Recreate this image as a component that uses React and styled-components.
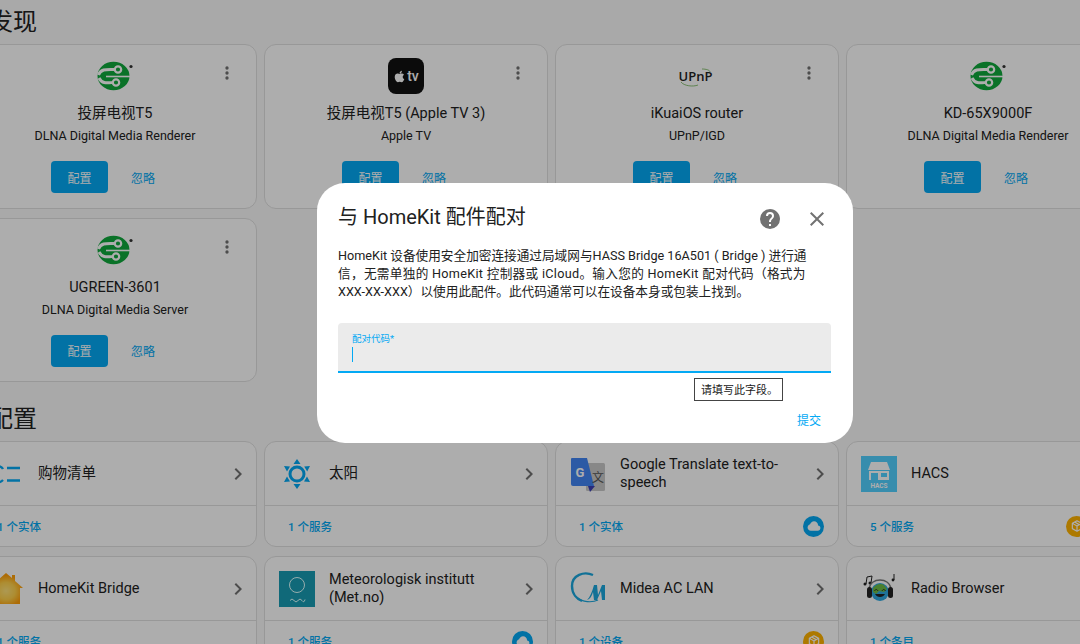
import React from 'react'
import styled, { createGlobalStyle } from 'styled-components'
import { FaApple } from 'react-icons/fa'

const GlobalStyle = createGlobalStyle`
  html, body {
    margin: 0;
    height: 100%;
    overflow: hidden;
    background: #fafafa;
  }
  body {
    font-family: Roboto, "Noto Sans CJK SC", sans-serif;
    color: #212121;
  }
`

const Page = styled.div`
  width: 1157px;
  height: 644px;
  margin-left: -27px;
  padding-top: 6px;
  box-sizing: border-box;
`

const SectionTitle = styled.h2`
  margin: ${(p) => (p.$second ? '21px' : '0')} 0 6px 16px;
  font-size: 24px;
  line-height: 32px;
  font-weight: 400;
`

const Grid = styled.div`
  display: grid;
  grid-template-columns: repeat(4, 284px);
  grid-auto-rows: ${(p) => p.$rowHeight}px;
  column-gap: 7px;
  row-gap: 9px;
`

const Card = styled.div`
  position: relative;
  box-sizing: border-box;
  border: 1px solid #e0e0e0;
  border-radius: 12px;
  background: #fff;
  display: flex;
  flex-direction: column;
`

const DiscoverCard = styled(Card)`
  align-items: center;
  padding-top: 13px;
`

const LogoBox = styled.div`
  width: 36px;
  height: 36px;
  display: flex;
  align-items: center;
  justify-content: center;
  flex: none;
`

const DeviceName = styled.div`
  margin-top: 10px;
  font-size: 14.5px;
  line-height: 20px;
`

const DeviceKind = styled.div`
  margin-top: 4px;
  font-size: 12.5px;
  line-height: 16px;
`

const Actions = styled.div`
  margin-top: 17px;
  display: flex;
  align-items: center;
`

const PrimaryButton = styled.div`
  width: 57px;
  height: 32px;
  border-radius: 4px;
  background: #03a9f4;
  color: #fff;
  font-size: 12px;
  display: flex;
  align-items: center;
  justify-content: center;
`

const GhostButton = styled.div`
  padding: 0 24px 0 23px;
  font-size: 12px;
  color: #03a9f4;
`

const MenuButton = styled.div`
  position: absolute;
  top: 18px;
  right: 19px;
  width: 20px;
  height: 20px;
  color: #727272;
`

const IntegrationTop = styled.div`
  height: 63px;
  flex: none;
  display: flex;
  align-items: center;
  padding: 0 6px 0 14px;
  border-bottom: 1px solid #e0e0e0;
`

const IntegrationName = styled.div`
  flex: 1;
  margin-left: 14px;
  font-size: 14.5px;
  line-height: 18px;
`

const Chevron = styled.div`
  width: 24px;
  height: 24px;
  color: #727272;
  flex: none;
`

const IntegrationFooter = styled.div`
  flex: 1;
  display: flex;
  align-items: center;
  justify-content: space-between;
  padding: 0 14px 0 23px;
  font-size: 11.5px;
  font-weight: 500;
  color: #03a9f4;
`

const Badges = styled.div`
  display: flex;
  gap: 7px;
`

const Badge = styled.div`
  width: 21px;
  height: 21px;
  border-radius: 50%;
  background: ${(p) => p.$color};
  color: #fff;
  display: flex;
  align-items: center;
  justify-content: center;
`

const Scrim = styled.div`
  position: fixed;
  inset: 0;
  background: rgba(0, 0, 0, 0.32);
  display: flex;
  align-items: center;
  justify-content: center;
  padding: 0 0 18px 90px;
`

const Dialog = styled.div`
  width: 536px;
  height: 260px;
  box-sizing: border-box;
  padding: 22px 0 0 21px;
  border-radius: 28px;
  background: #fff;
`

const DialogHeader = styled.div`
  display: flex;
  justify-content: space-between;
  padding-right: 24px;
`

const DialogTitle = styled.div`
  font-size: 20px;
  line-height: 24px;
`

const HeaderIcons = styled.div`
  margin-top: 2px;
  display: flex;
  gap: 23px;
  color: #727272;
`

const Description = styled.div`
  margin-top: 16px;
  font-size: 12.65px;
  line-height: 18px;
  white-space: nowrap;
`

const DescriptionLine = styled.div`
  letter-spacing: ${(p) => p.$spacing || 0}px;
`

const FieldWrap = styled.div`
  position: relative;
  width: 493px;
  margin-top: 22px;
`

const Field = styled.div`
  height: 50px;
  box-sizing: border-box;
  padding: 10px 14px 0;
  background: #ebebeb;
  border-radius: 4px 4px 0 0;
  border-bottom: 2px solid #03a9f4;
`

const FieldLabel = styled.div`
  font-size: 9.5px;
  line-height: 12px;
  color: #03a9f4;
`

const Caret = styled.div`
  width: 1px;
  height: 15px;
  margin-top: 2px;
  background: #03a9f4;
`

const ValidationTip = styled.div`
  position: absolute;
  top: 55px;
  left: 356px;
  width: 89px;
  height: 23px;
  box-sizing: border-box;
  border: 1px solid #444;
  background: #fff;
  font-size: 11px;
  line-height: 23px;
  padding-left: 6px;
  white-space: nowrap;
`

const DialogFooter = styled.div`
  margin-top: 40px;
  padding-right: 32px;
  text-align: right;
  font-size: 12px;
  line-height: 16px;
  color: #03a9f4;
`

const Mdi = ({ d, size = 24 }) => (
  <svg width={size} height={size} viewBox="0 0 24 24" fill="currentColor">
    <path d={d} />
  </svg>
)

const paths = {
  dots: 'M12,16A2,2 0 0,1 14,18A2,2 0 0,1 12,20A2,2 0 0,1 10,18A2,2 0 0,1 12,16M12,10A2,2 0 0,1 14,12A2,2 0 0,1 12,14A2,2 0 0,1 10,12A2,2 0 0,1 12,10M12,4A2,2 0 0,1 14,6A2,2 0 0,1 12,8A2,2 0 0,1 10,6A2,2 0 0,1 12,4Z',
  chevron: 'M8.59,16.58L13.17,12L8.59,7.41L10,6L16,12L10,18L8.59,16.58Z',
  help: 'M15.07,11.25L14.17,12.17C13.45,12.89 13,13.5 13,15H11V14.5C11,13.39 11.45,12.39 12.17,11.67L13.41,10.41C13.78,10.05 14,9.55 14,9C14,7.89 13.1,7 12,7A2,2 0 0,0 10,9H8A4,4 0 0,1 12,5A4,4 0 0,1 16,9C16,9.88 15.64,10.67 15.07,11.25M13,19H11V17H13M12,2A10,10 0 0,0 2,12A10,10 0 0,0 12,22A10,10 0 0,0 22,12C22,6.47 17.5,2 12,2Z',
  close: 'M19,6.41L17.59,5L12,10.59L6.41,5L5,6.41L10.59,12L5,17.59L6.41,19L12,13.41L17.59,19L19,17.59L13.41,12L19,6.41Z',
  cloud: 'M6.5,20Q4.22,20 2.61,18.43 1,16.85 1,14.58 1,12.63 2.17,11.1 3.35,9.57 5.25,9.15 5.88,6.85 7.75,5.43 9.63,4 12,4 14.93,4 16.96,6.04 19,8.07 19,11 20.73,11.2 21.86,12.5 23,13.78 23,15.5 23,17.38 21.69,18.69 20.38,20 18.5,20Z',
  box: 'M21,16.5C21,16.88 20.79,17.21 20.47,17.38L12.57,21.82C12.41,21.94 12.21,22 12,22C11.79,22 11.59,21.94 11.43,21.82L3.53,17.38C3.21,17.21 3,16.88 3,16.5V7.5C3,7.12 3.21,6.79 3.53,6.62L11.43,2.18C11.59,2.06 11.79,2 12,2C12.21,2 12.41,2.06 12.57,2.18L20.47,6.62C20.79,6.79 21,7.12 21,7.5V16.5M12,4.15L10.11,5.22L16,8.61L17.96,7.5L12,4.15M6.04,7.5L12,10.85L13.96,9.75L8.08,6.35L6.04,7.5M5,15.91L11,19.29V12.58L5,9.21V15.91M19,15.91V9.21L13,12.58V19.29L19,15.91Z',
}

const DlnaLogo = () => (
  <svg width="36" height="36" viewBox="0 0 36 36">
    <ellipse cx="16.5" cy="18" rx="16" ry="14.3" fill="#0fa83c" />
    <g fill="none" stroke="#fff">
      <path d="M1.500 17C4 10.500 10 11.500 18 11.500" strokeWidth="3" />
      <path d="M2 20C5 26 10 25 16 24.500" strokeWidth="3" />
      <path d="M9 18.500H33" strokeWidth="1.600" />
      <circle cx="21" cy="11.500" r="3.200" fill="#0fa83c" strokeWidth="2.200" />
      <circle cx="19" cy="24.500" r="3.200" fill="#0fa83c" strokeWidth="2.200" />
    </g>
    <circle cx="34" cy="8.500" r="1.600" fill="#333" />
  </svg>
)

const TvLogoBox = styled.div`
  width: 36px;
  height: 36px;
  border-radius: 8px;
  background: #111;
  color: #fff;
  display: flex;
  align-items: center;
  justify-content: center;
  gap: 1px;
  font-size: 14px;
  font-weight: 500;
`

const AppleTvLogo = () => (
  <TvLogoBox>
    <FaApple size={13} />
    tv
  </TvLogoBox>
)

const UpnpLogo = () => (
  <svg width="36" height="36" viewBox="0 0 36 36">
    <text x="16.500" y="23" textAnchor="middle" fontFamily="'Open Sans', sans-serif" fontSize="13" fontWeight="600" fill="#222">UPnP</text>
    <path d="M23 11c4 0 8 1 8 3M2 24c3 4 12 5 17 3" fill="none" stroke="#5aa83c" strokeWidth="0.7" />
  </svg>
)

const ListIcon = () => (
  <svg width="36" height="36" viewBox="0 0 36 36" fill="none" stroke="#03a9f4" strokeWidth="2.400">
    <path d="M19 12h13M19 24.500h13" />
    <path d="M4 14c2-5 9-5 11-1M4 22c3 6 8 5 11 2" />
  </svg>
)

const SunIcon = () => (
  <svg width="36" height="36" viewBox="0 0 36 36" fill="#03a9f4">
    <circle cx="18" cy="18" r="7" fill="none" stroke="#03a9f4" strokeWidth="3" />
    <path d="M18 3l3.500 5h-7zM18 33l-3.500-5h7zM5 10l6 .5-3 5zM31 10l-2.800 5.500-3-5zM5 26l3-5.500 3 5zM31 26l-6-.5 3-5z" />
  </svg>
)

const GoogleIcon = () => (
  <svg width="36" height="36" viewBox="0 0 36 36">
    <rect x="16" y="7" width="19" height="28" rx="1.500" fill="#c9c9c9" />
    <path d="M2 2h15l7 28H3a2 2 0 0 1-2-2V3a1 1 0 0 1 1-1z" fill="#4285f4" />
    <path d="M18 30h7l-5 6z" fill="#3b3fb5" />
    <text x="10" y="20.500" textAnchor="middle" fontFamily="Roboto, sans-serif" fontSize="13" fontWeight="700" fill="#fff">G</text>
    <text x="28" y="26" textAnchor="middle" fontFamily="'Noto Sans CJK SC', sans-serif" fontSize="12" fill="#555">文</text>
  </svg>
)

const HacsIcon = () => (
  <svg width="36" height="36" viewBox="0 0 36 36">
    <rect width="36" height="36" fill="#52d0ff" />
    <path d="M10 6h16l3 8H7z" fill="#fff" />
    <rect x="8" y="15" width="20" height="9" fill="#fff" />
    <rect x="10" y="17" width="7" height="7" fill="#52d0ff" />
    <rect x="20" y="17" width="6" height="4" fill="#52d0ff" />
    <text x="18" y="32" textAnchor="middle" fontFamily="Roboto, sans-serif" fontSize="6.500" fontWeight="700" fill="#fff">HACS</text>
  </svg>
)

const HomeIcon = () => (
  <svg width="36" height="36" viewBox="0 0 36 36">
    <defs>
      <radialGradient id="homeGlow" cx="50%" cy="58%" r="50%">
        <stop offset="0%" stopColor="#ffe27a" />
        <stop offset="55%" stopColor="#ffd04a" />
        <stop offset="100%" stopColor="#ff9f0a" />
      </radialGradient>
    </defs>
    <path d="M18 2l6 5V4h3v6l8 7h-3v16H4V17H1z" fill="url(#homeGlow)" />
  </svg>
)

const MetIcon = () => (
  <svg width="36" height="36" viewBox="0 0 36 36">
    <rect width="36" height="36" fill="#189bb3" />
    <circle cx="18" cy="14" r="7.500" fill="none" stroke="#dff" strokeWidth="1" />
    <path d="M11 29.500q2-3 4 0t4 0 4 0 3-1" fill="none" stroke="#dff" strokeWidth="1" />
  </svg>
)

const MideaIcon = () => (
  <svg width="36" height="36" viewBox="0 0 36 36" fill="none">
    <path d="M23 4C14 0 2 4 2 15c0 8 5 13 10 15" stroke="#1aa7de" strokeWidth="2.400" />
    <path d="M8 27c4 4 14 5 20 2" stroke="#1aa7de" strokeWidth="1.200" />
    <path d="M17 29c3-3 5-8 7-15h3l1 10 4-10h3v15h-3l-1-9-4 9h-3l-1-8c-1 4-3 7-6 8z" fill="#1aa7de" />
  </svg>
)

const RadioIcon = () => (
  <svg width="36" height="36" viewBox="0 0 36 36" fill="none">
    <path d="M5 13l1-7 5-1-1 7M33 3v6" stroke="#222" strokeWidth="1" />
    <circle cx="4" cy="13" r="1.500" fill="#222" />
    <circle cx="9" cy="12" r="1.500" fill="#222" />
    <circle cx="32" cy="9" r="1.400" fill="#222" />
    <path d="M8 18c1-12 21-12 22 0" stroke="#777" strokeWidth="1.300" />
    <circle cx="19" cy="21" r="9" fill="#2fa8e0" />
    <path d="M12 17c3-4 8-5 11-3l3 4-3 3-5-1-3 3-3-2z" fill="#6dbb45" />
    <rect x="6" y="16" width="5" height="11" rx="2.500" fill="#222" />
    <rect x="27" y="16" width="5" height="11" rx="2.500" fill="#222" />
    <path d="M14 23c2 4 8 4 10 0z" fill="#222" />
    <path d="M13.500 20c1-2 2.500-2 3.500 0M21 20c1-2 2.500-2 3.500 0" stroke="#222" strokeWidth="0.900" />
  </svg>
)

const devices = [
  { name: '投屏电视T5', kind: 'DLNA Digital Media Renderer', Logo: DlnaLogo },
  { name: '投屏电视T5 (Apple TV 3)', kind: 'Apple TV', Logo: AppleTvLogo },
  { name: 'iKuaiOS router', kind: 'UPnP/IGD', Logo: UpnpLogo },
  { name: 'KD-65X9000F', kind: 'DLNA Digital Media Renderer', Logo: DlnaLogo },
  { name: 'UGREEN-3601', kind: 'DLNA Digital Media Server', Logo: DlnaLogo },
]

const BLUE = '#03a9f4'
const ORANGE = '#ffb300'

const integrations = [
  { name: '购物清单', count: '1 个实体', Icon: ListIcon },
  { name: '太阳', count: '1 个服务', Icon: SunIcon },
  { name: 'Google Translate text-to-speech', count: '1 个实体', Icon: GoogleIcon, badges: [{ color: BLUE, icon: 'cloud' }] },
  { name: 'HACS', count: '5 个服务', Icon: HacsIcon, badges: [{ color: ORANGE, icon: 'box' }, { color: BLUE, icon: 'cloud' }] },
  { name: 'HomeKit Bridge', count: '1 个服务', Icon: HomeIcon },
  { name: 'Meteorologisk institutt (Met.no)', count: '1 个服务', Icon: MetIcon, badges: [{ color: BLUE, icon: 'cloud' }] },
  { name: 'Midea AC LAN', count: '1 个设备', Icon: MideaIcon, badges: [{ color: ORANGE, icon: 'box' }] },
  { name: 'Radio Browser', count: '1 个条目', Icon: RadioIcon },
]

export default function App() {
  return (
    <>
      <GlobalStyle />
      <Page>
        <SectionTitle>发现</SectionTitle>
        <Grid $rowHeight={164.5}>
          {devices.map(({ name, kind, Logo }) => (
            <DiscoverCard key={name}>
              <LogoBox><Logo /></LogoBox>
              <MenuButton><Mdi d={paths.dots} size={20} /></MenuButton>
              <DeviceName>{name}</DeviceName>
              <DeviceKind>{kind}</DeviceKind>
              <Actions>
                <PrimaryButton>配置</PrimaryButton>
                <GhostButton>忽略</GhostButton>
              </Actions>
            </DiscoverCard>
          ))}
        </Grid>

        <SectionTitle $second>配置</SectionTitle>
        <Grid $rowHeight={106}>
          {integrations.map(({ name, count, Icon, badges = [] }) => (
            <Card key={name}>
              <IntegrationTop>
                <LogoBox><Icon /></LogoBox>
                <IntegrationName>{name}</IntegrationName>
                <Chevron><Mdi d={paths.chevron} /></Chevron>
              </IntegrationTop>
              <IntegrationFooter>
                <span>{count}</span>
                <Badges>
                  {badges.map((b) => (
                    <Badge key={b.icon} $color={b.color}><Mdi d={paths[b.icon]} size={14} /></Badge>
                  ))}
                </Badges>
              </IntegrationFooter>
            </Card>
          ))}
        </Grid>
      </Page>

      <Scrim>
        <Dialog>
          <DialogHeader>
            <DialogTitle>与 HomeKit 配件配对</DialogTitle>
            <HeaderIcons>
              <Mdi d={paths.help} />
              <Mdi d={paths.close} />
            </HeaderIcons>
          </DialogHeader>
          <Description>
            <DescriptionLine>HomeKit 设备使用安全加密连接通过局域网与HASS Bridge 16A501 ( Bridge ) 进行通</DescriptionLine>
            <DescriptionLine $spacing={0.3}>信，无需单独的 HomeKit 控制器或 iCloud。输入您的 HomeKit 配对代码（格式为</DescriptionLine>
            <DescriptionLine>XXX-XX-XXX）以使用此配件。此代码通常可以在设备本身或包装上找到。</DescriptionLine>
          </Description>
          <FieldWrap>
            <Field>
              <FieldLabel>配对代码*</FieldLabel>
              <Caret />
            </Field>
            <ValidationTip>请填写此字段。</ValidationTip>
          </FieldWrap>
          <DialogFooter>提交</DialogFooter>
        </Dialog>
      </Scrim>
    </>
  )
}
